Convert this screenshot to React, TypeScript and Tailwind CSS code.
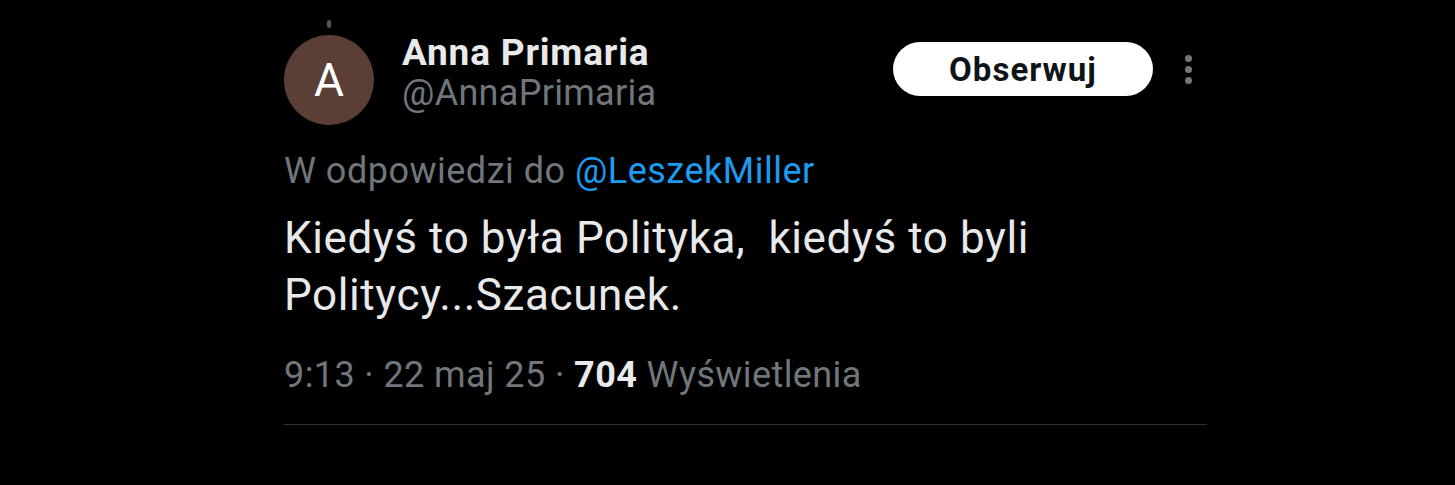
export default function App() {
  return (
    <div
      className="w-[1455px] h-[485px] bg-black overflow-hidden"
      style={{ fontFamily: "Roboto, 'Noto Sans', sans-serif" }}
    >
      <div className="ml-[284px] w-[923px] flex flex-col">
        <div className="h-[35px]">
          <div className="ml-[43px] mt-[20px] w-[4px] h-[8px] rounded-full bg-[#55585d]" />
        </div>
        <div className="flex items-start h-[90px]">
          <div className="w-[90px] h-[90px] shrink-0 rounded-full bg-[#5b3f37] flex items-center justify-center text-white text-[46px] leading-none">
            A
          </div>
          <div className="ml-[28px] flex flex-col -mt-[3px]">
            <span className="text-[#e7e9ea] text-[37px] font-bold leading-[41px] tracking-[0.8px]">Anna Primaria</span>
            <span className="text-[#71767b] text-[36px] leading-[41px] tracking-[0.3px]">@AnnaPrimaria</span>
          </div>
          <div className="ml-auto flex items-center mt-[7px]">
            <button className="w-[260px] h-[54px] rounded-full bg-white text-[#0f1419] text-[33px] font-bold tracking-[1px] leading-none">
              Obserwuj
            </button>
            <div className="ml-[32px] mr-[15px] flex flex-col gap-[4px]">
              <span className="w-[7px] h-[7px] rounded-full bg-[#71767b]" />
              <span className="w-[7px] h-[7px] rounded-full bg-[#71767b]" />
              <span className="w-[7px] h-[7px] rounded-full bg-[#71767b]" />
            </div>
          </div>
        </div>
        <div className="mt-[25px] text-[36px] leading-[42px] tracking-[0.5px] text-[#71767b]">
          W odpowiedzi do <span className="text-[#1d9bf0]">@LeszekMiller</span>
        </div>
        <div className="mt-[18px] text-[44px] leading-[57px] tracking-[0.6px] text-[#e7e9ea] whitespace-pre">
          {"Kiedyś to była Polityka,  kiedyś to byli\nPolitycy...Szacunek."}
        </div>
        <div className="mt-[30px] text-[36px] leading-[42px] tracking-[0.4px] text-[#71767b]">
          9:13 · 22 maj 25 · <span className="text-[#e7e9ea] font-bold">704</span> Wyświetlenia
        </div>
        <div className="mt-[28px] h-px bg-[#2f3336]" />
      </div>
    </div>
  );
}
